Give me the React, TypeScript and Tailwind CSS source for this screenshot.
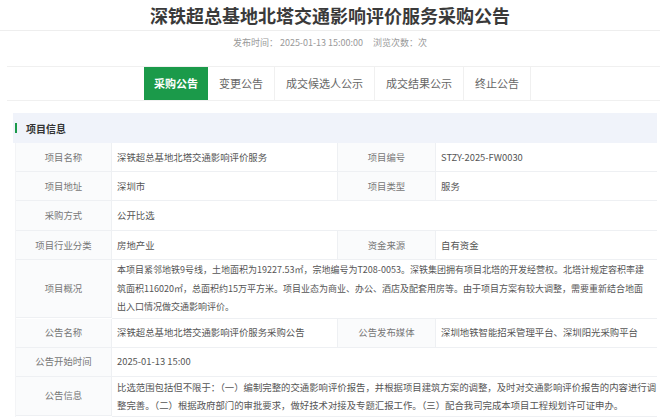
import React from 'react';

const tabs = ['采购公告', '变更公告', '成交候选人公示', '成交结果公示', '终止公告'];

function Label({ children, className = '' }: { children: React.ReactNode; className?: string }) {
  return (
    <div className={`flex items-center justify-center bg-[#fafbfc] text-[#777] border-r border-[#eef0f3] ${className}`}>
      {children}
    </div>
  );
}

function Value({ children, className = '' }: { children: React.ReactNode; className?: string }) {
  return (
    <div className={`flex flex-col justify-center px-[5px] py-[1px] text-[#555] ${className}`}>
      {children}
    </div>
  );
}

export default function App() {
  return (
    <div
      className="w-[660px] h-[418px] overflow-hidden bg-white"
      style={{ fontFamily: '"Noto Sans CJK SC", "Noto Sans", sans-serif' }}
    >
      {/* title */}
      <div className="h-[31px] flex items-center justify-center border-b border-[#eeeeee]">
        <h1 className="text-[18px] font-bold text-[#3a3a3a]">深铁超总基地北塔交通影响评价服务采购公告</h1>
      </div>
      <div className="h-[24px] flex items-center justify-center text-[9px] text-[#999] gap-[10px]">
        <span>发布时间： 2025-01-13 15:00:00</span>
        <span>浏览次数：次</span>
      </div>

      {/* tabs */}
      <div className="mt-[11px] ml-[7px] h-[35px] border-y border-[#f0f0f0] flex pl-[137px]">
        {tabs.map((t, i) => (
          <div
            key={t}
            className={
              i === 0
                ? 'h-full px-[10px] flex items-center bg-[#1b9a4a] text-white text-[11px] font-bold'
                : 'h-full px-[11px] flex items-center text-[#666] text-[11px] border-r border-[#f0f0f0]'
            }
          >
            {t}
          </div>
        ))}
      </div>

      {/* section */}
      <div className="mt-[12px] ml-[13px] mr-[3px]">
        <div className="h-[30px] bg-[#f0f3fa] flex items-center">
          <span className="ml-[2px] w-[2px] h-[10px] bg-[#1b9a4a]" />
          <span className="ml-[9px] text-[10px] font-bold text-[#333]">项目信息</span>
        </div>

        <div className="ml-[2px] grid grid-cols-[96px_226px_98px_1fr] text-[9.4px] leading-[18.5px] border-l border-[#f3f4f6]">
          {/* row 1 */}
          <Label className="h-[29px] border-b">项目名称</Label>
          <Value className="border-b border-r border-[#eef0f3]">深铁超总基地北塔交通影响评价服务</Value>
          <Label className="border-b">项目编号</Label>
          <Value className="border-b border-[#eef0f3]">STZY-2025-FW0030</Value>

          {/* row 2 */}
          <Label className="h-[29px] border-b">项目地址</Label>
          <Value className="border-b border-r border-[#eef0f3]">深圳市</Value>
          <Label className="border-b">项目类型</Label>
          <Value className="border-b border-[#eef0f3]">服务</Value>

          {/* row 3 */}
          <Label className="h-[30px] border-b">采购方式</Label>
          <Value className="col-span-3 border-b border-[#eef0f3]">公开比选</Value>

          {/* row 4 */}
          <Label className="h-[29px] border-b">项目行业分类</Label>
          <Value className="border-b border-r border-[#eef0f3]">房地产业</Value>
          <Label className="border-b">资金来源</Label>
          <Value className="border-b border-[#eef0f3]">自有资金</Value>

          {/* row 5 */}
          <Label className="h-[58px] border-b">项目概况</Label>
          <Value className="col-span-3 border-b border-[#eef0f3] whitespace-nowrap text-[9px]">
            <span>本项目紧邻地铁9号线，土地面积为19227.53㎡，宗地编号为T208-0053。深铁集团拥有项目北塔的开发经营权。北塔计规定容积率建</span>
            <span>筑面积116020㎡，总面积约15万平方米。项目业态为商业、办公、酒店及配套用房等。由于项目方案有较大调整，需要重新结合地面</span>
            <span>出入口情况做交通影响评价。</span>
          </Value>

          {/* row 6 */}
          <Label className="h-[29px] border-b">公告名称</Label>
          <Value className="border-b border-r border-[#eef0f3]">深铁超总基地北塔交通影响评价服务采购公告</Value>
          <Label className="border-b">公告发布媒体</Label>
          <Value className="border-b border-[#eef0f3]">深圳地铁智能招采管理平台、深圳阳光采购平台</Value>

          {/* row 7 */}
          <Label className="h-[29px] border-b">公告开始时间</Label>
          <Value className="col-span-3 border-b border-[#eef0f3]">2025-01-13 15:00</Value>

          {/* row 8 */}
          <Label className="h-[39px] border-b">公告信息</Label>
          <Value className="col-span-3 border-b border-[#eef0f3] whitespace-nowrap">
            <span>比选范围包括但不限于：（一）编制完整的交通影响评价报告，并根据项目建筑方案的调整，及时对交通影响评价报告的内容进行调</span>
            <span>整完善。（二）根据政府部门的审批要求，做好技术对接及专题汇报工作。（三）配合我司完成本项目工程规划许可证申办。</span>
          </Value>
        </div>
      </div>
    </div>
  );
}
